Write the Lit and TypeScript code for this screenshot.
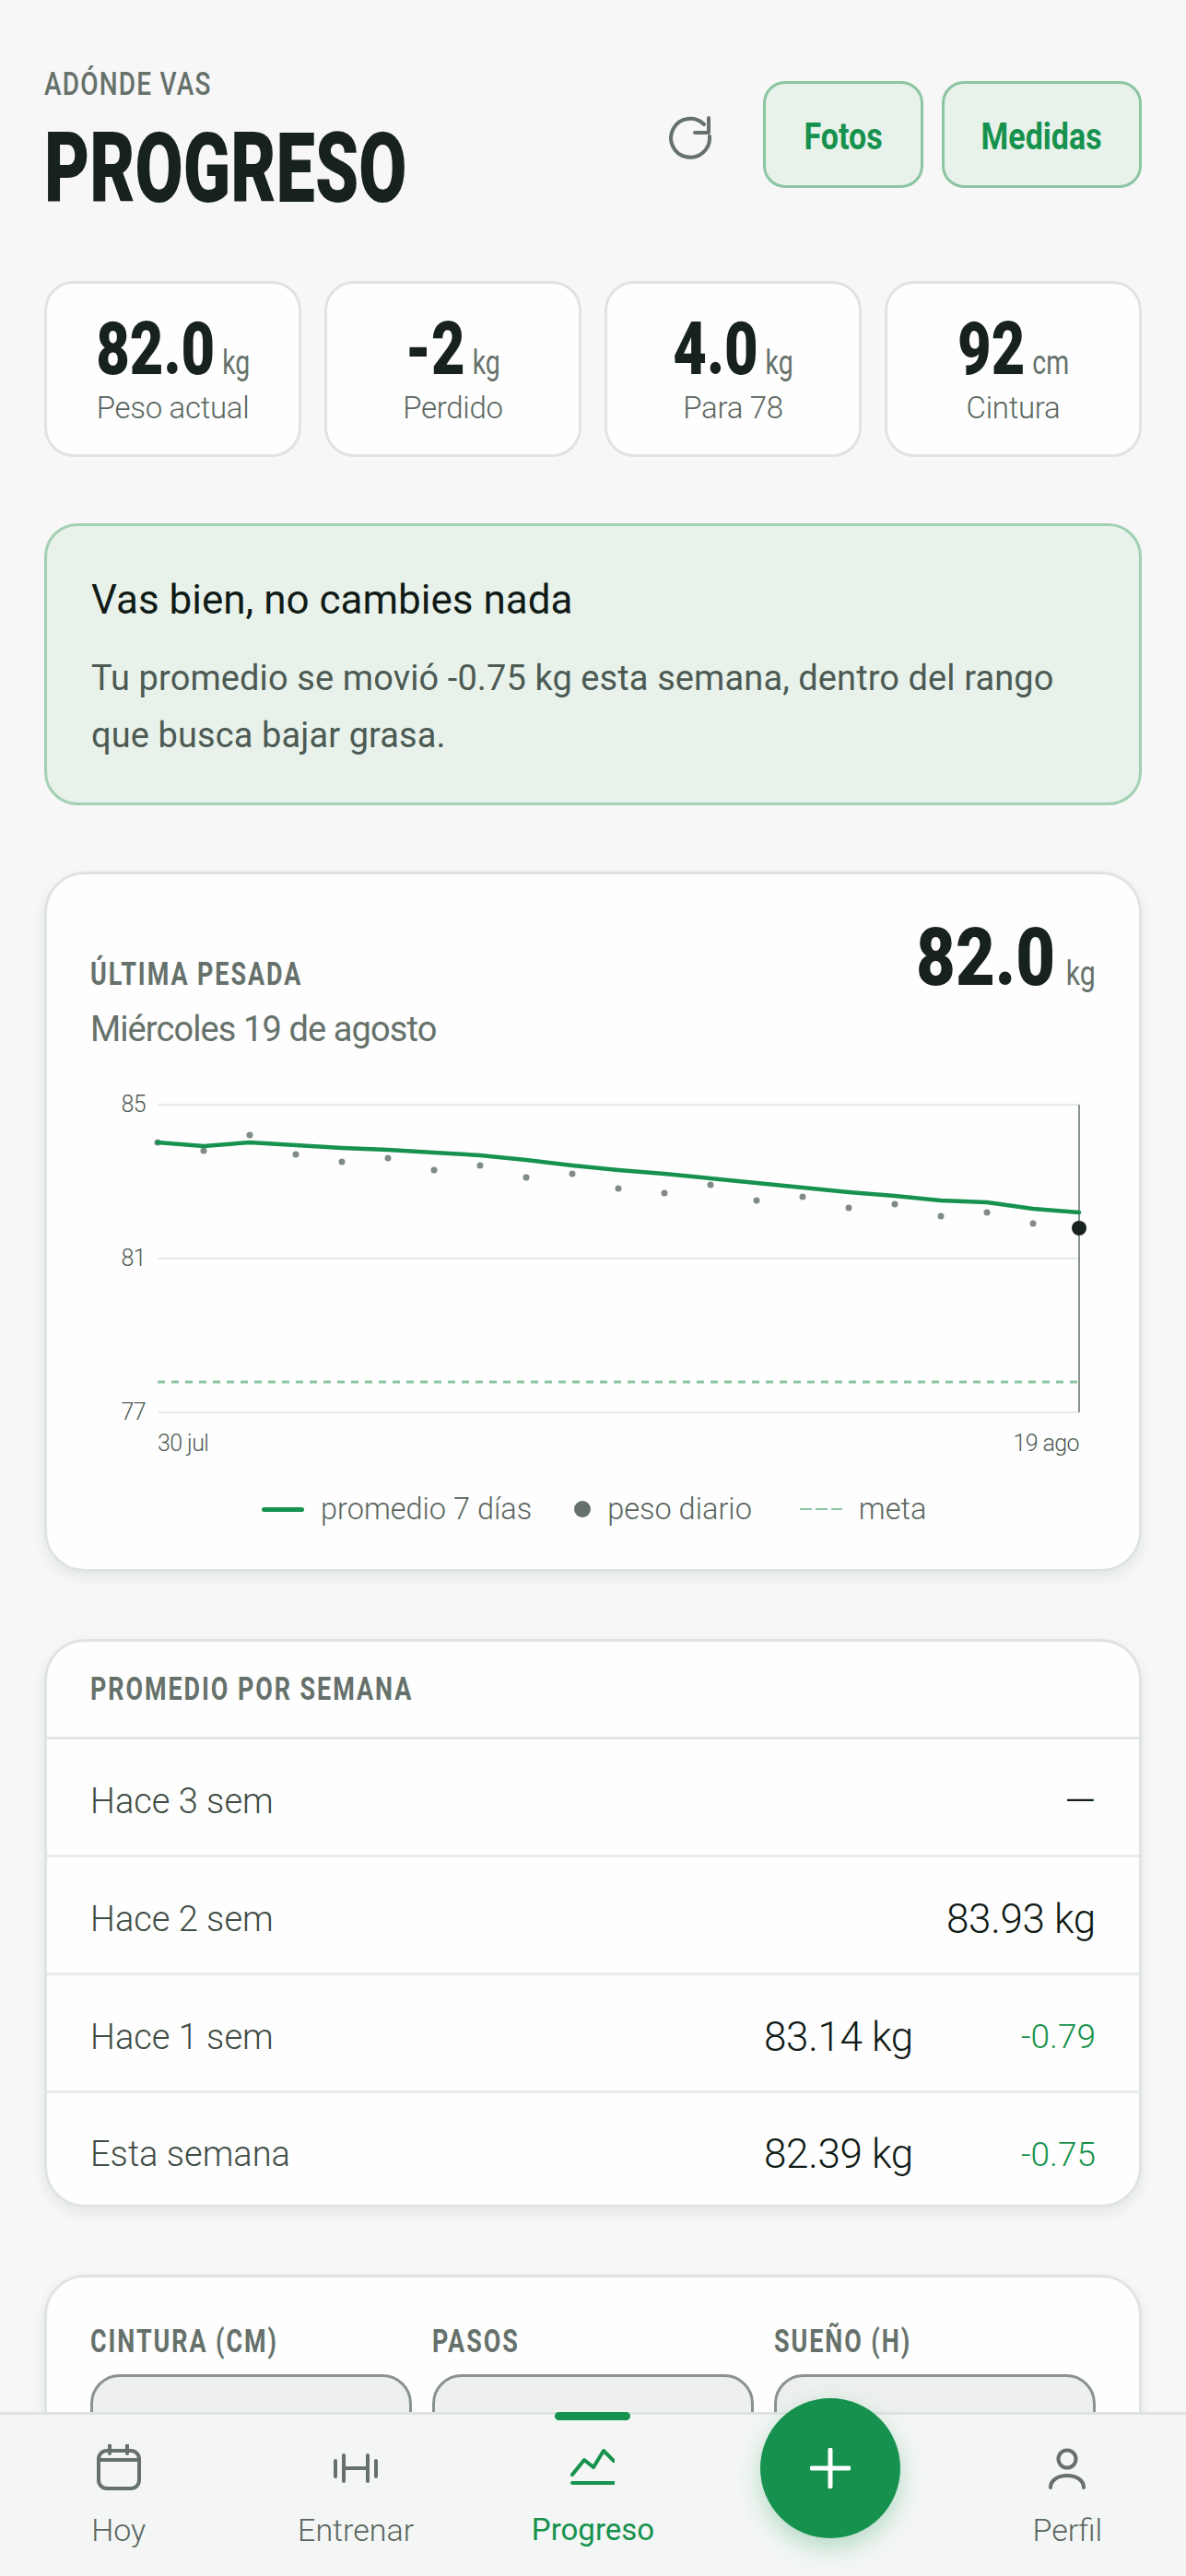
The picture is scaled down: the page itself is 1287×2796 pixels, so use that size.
import { LitElement, html, css, svg } from 'lit';
import { customElement } from 'lit/decorators.js';

const STATS = [
  { value: '82.0', unit: 'kg', label: 'Peso actual' },
  { value: '-2', unit: 'kg', label: 'Perdido' },
  { value: '4.0', unit: 'kg', label: 'Para 78' },
  { value: '92', unit: 'cm', label: 'Cintura' },
];

const WEEKS = [
  { label: 'Hace 3 sem', value: '—', delta: '' },
  { label: 'Hace 2 sem', value: '83.93 kg', delta: '' },
  { label: 'Hace 1 sem', value: '83.14 kg', delta: '-0.79' },
  { label: 'Esta semana', value: '82.39 kg', delta: '-0.75' },
];

// y of each day, measured in page pixels minus the chart top
const AVG = [1239, 1243, 1239, 1242, 1245, 1247, 1250, 1253, 1258, 1264, 1269, 1273, 1278, 1283, 1288, 1293, 1297, 1302, 1304, 1311, 1315];
const DAILY = [1239, 1248, 1231, 1252, 1260, 1256, 1269, 1264, 1277, 1273, 1289, 1294, 1285, 1302, 1298, 1310, 1306, 1319, 1315, 1327];
const CHART_TOP = 1180;

const chartX = (i: number) => 171 - 98 + i * 50;
const chartY = (y: number) => y - CHART_TOP;

const ICONS = {
  calendar: svg`<rect x="2" y="7" width="44" height="41" rx="9"/><path d="M2 17h44M14 1v9M33 1v9"/>`,
  dumbbell: svg`<path d="M2 18v17M11 12v28M37 12v28M46 18v17M11 26h26"/>`,
  trend: svg`<path d="M2 33l13-16 10 8L36 7l11 11M2 42h45"/>`,
  person: svg`<circle cx="24" cy="16" r="9.5"/><path d="M6 47c0-8 8-13 18-13s18 5 18 13"/>`,
};

@customElement('app-root')
export class AppRoot extends LitElement {
  static override styles = css`
    :host {
      display: block;
      position: relative;
      width: 1287px;
      height: 2796px;
      overflow: hidden;
      background: #f6f7f6;
      color: #17211d;
      font-family: 'Roboto', 'Liberation Sans', sans-serif;
    }
    .page { padding: 70px 48px 0; display: flex; flex-direction: column; }

    /* header */
    .head { display: flex; justify-content: space-between; height: 235px; }
    .eyebrow { width: max-content; font-size: 35px; line-height: 44px; letter-spacing: 1.5px; color: #66716b; font-weight: 500; transform: scaleX(.8); transform-origin: left; }
    .title { width: max-content; font-size: 105px; line-height: 100px; font-weight: 900; margin-top: 20px; transform: scaleX(.72); transform-origin: left; }
    .actions { display: flex; align-items: flex-start; padding-top: 18px; }
    .refresh { width: 48px; height: 48px; margin: 37px 55px 0 2px; fill: none; stroke: #66716b; stroke-width: 4; stroke-linecap: round; stroke-linejoin: round; }
    .chip {
      height: 116px; box-sizing: border-box; padding-top: 5px; border: 3px solid #8cc5a2; border-radius: 24px; background: #e8f2eb;
      display: flex; align-items: center; justify-content: center;
      color: #16924e; font-size: 40px; font-weight: 700;
    }
    .chip span { transform: scaleX(.85); }
    .chip.fotos { width: 174px; margin-right: 20px; }
    .chip.medidas { width: 217px; }

    /* stats */
    .stats { display: grid; grid-template-columns: repeat(4, 279px); justify-content: space-between; }
    .stat {
      height: 191px; box-sizing: border-box; background: #fdfefd; border: 3px solid #dfe4e2; border-radius: 32px;
      display: flex; flex-direction: column; align-items: center; padding-top: 31px;
    }
    .stat-top { display: flex; align-items: baseline; gap: 10px; line-height: 80px; transform: scaleX(.79); }
    .stat-val { font-size: 80px; font-weight: 900; }
    .stat-unit { font-size: 36px; color: #66716b; }
    .stat-label { font-size: 33px; line-height: 44px; letter-spacing: -.3px; font-weight: 300; color: #5a655f; margin-top: -13px; }

    /* banner */
    .banner {
      margin-top: 72px; height: 306px; box-sizing: border-box; padding: 52px 48px 0;
      background: #e8f2eb; border: 3px solid #a3d0b3; border-radius: 36px;
    }
    .banner h2 { margin: 0; font-size: 44px; line-height: 56px; font-weight: 400; color: #101a16; }
    .banner p { margin: 26px 0 0; font-size: 38px; line-height: 62px; letter-spacing: .1px; color: #4d5a53; }

    /* cards */
    .card {
      background: #fdfefd; border: 3px solid #dfe4e2; border-radius: 44px; box-sizing: border-box;
      box-shadow: 0 6px 14px rgba(30, 50, 40, 0.08);
    }
    .weight { margin-top: 72px; height: 760px; padding: 40px 47px 0; }
    .weight-top { display: flex; justify-content: space-between; align-items: flex-start; height: 192px; }
    .section { width: max-content; font-size: 35px; line-height: 44px; letter-spacing: 2.5px; font-weight: 700; color: #66716b; transform: scaleX(.77); transform-origin: left; }
    .weight .section { margin-top: 47px; }
    .date { font-size: 38px; line-height: 52px; letter-spacing: -.9px; color: #66716b; margin-top: 11px; }
    .weight-val { display: flex; align-items: baseline; gap: 14px; line-height: 100px; transform: scaleX(.84); transform-origin: right; }
    .weight-num { font-size: 88px; font-weight: 900; }
    .weight-unit { font-size: 36px; color: #66716b; }
    .chart { display: block; width: 1100px; height: 420px; margin-left: 0; overflow: visible; }
    .chart text { font-family: 'Roboto', sans-serif; font-size: 25px; font-weight: 300; letter-spacing: -.6px; fill: #4f5a54; }
    .legend { display: flex; align-items: center; margin-left: 186px; margin-top: 15px; font-size: 32.5px; font-weight: 300; line-height: 44px; color: #5a655f; }
    .lg-line { width: 46px; height: 5px; border-radius: 3px; background: #16924e; margin-right: 18px; }
    .lg-dot { width: 18px; height: 18px; border-radius: 50%; background: #66716b; margin: 0 18px 0 46px; }
    .lg-dash { width: 46px; height: 2px; background: repeating-linear-gradient(90deg, #8cc5a2 0 13px, transparent 13px 17px); margin: 0 18px 0 52px; }

    /* weekly table */
    .weeks { margin-top: 73px; height: 617px; }
    .weeks-head { height: 106px; box-sizing: border-box; padding: 30px 47px 0; border-bottom: 3px solid #e3e7e5; }
    .row { height: 128px; box-sizing: border-box; padding: 8px 47px 0; display: flex; align-items: center; border-bottom: 3px solid #e9ecea; font-size: 38px; font-weight: 300; color: #3f4b45; }
    .row:last-child { border-bottom: none; height: 124px; }
    .row-label { flex: 1; }
    .row-val { color: #101a16; font-size: 44px; letter-spacing: -.3px; text-align: right; }
    .row-delta { width: 198px; text-align: right; color: #16924e; font-size: 37px; }

    /* trackers */
    .trackers { margin-top: 73px; height: 400px; padding: 48px 47px 0; display: grid; grid-template-columns: repeat(3, 349px); justify-content: space-between; align-content: start; }
    .tracker-box { margin-top: 13px; height: 120px; box-sizing: border-box; border: 3px solid #8a938e; border-radius: 32px; background: #edf0ee; }

    /* bottom nav */
    .nav {
      position: absolute; left: 0; right: 0; bottom: 0; height: 178px; box-sizing: border-box;
      border-top: 3px solid #dfe4e2; background: #f3f6f4;
      display: grid; grid-template-columns: repeat(5, 1fr);
    }
    .nav-item { position: relative; display: flex; flex-direction: column; align-items: center; padding-top: 32px; color: #5a655f; font-size: 34px; font-weight: 300; }
    .nav-item svg { width: 48px; height: 50px; fill: none; stroke: #66716b; stroke-width: 4; stroke-linecap: round; stroke-linejoin: round; }
    .nav-label { margin-top: 21px; line-height: 44px; }
    .nav-item.on { color: #16924e; font-weight: 400; font-size: 33px; }
    .nav-item.on svg { stroke: #16924e; }
    .nav-item.on::before { content: ''; position: absolute; top: -3px; left: 50%; width: 82px; height: 9px; margin-left: -41px; border-radius: 5px; background: #16924e; }
    .fab {
      position: absolute; left: 50%; top: -18px; width: 152px; height: 152px; margin-left: -76px; border-radius: 50%;
      background: #16924e; box-shadow: 0 10px 24px rgba(22, 146, 78, 0.28);
      display: flex; align-items: center; justify-content: center;
    }
    .nav-item .fab svg { width: 44px; height: 44px; stroke: #fff; stroke-width: 5; }
  `;

  private renderChart() {
    const avg = AVG.map((y, i) => `${chartX(i)},${chartY(y)}`).join(' ');
    const left = chartX(0);
    const right = chartX(20);
    return html`<svg class="chart" viewBox="0 0 1100 420">
      ${[[85, 1198], [81, 1365], [77, 1532]].map(([n, y]) => svg`
        <line x1=${left} x2=${right} y1=${chartY(y)} y2=${chartY(y)} stroke="#e6e9e7" stroke-width="2"/>
        <text x="60" y=${chartY(y) + 8} text-anchor="end">${n}</text>`)}
      <line x1=${left} x2=${right} y1=${chartY(1499)} y2=${chartY(1499)} stroke="#8cc5a2" stroke-width="3" stroke-dasharray="8 7"/>
      <line x1=${right} x2=${right} y1=${chartY(1198)} y2=${chartY(1532)} stroke="#8a938e" stroke-width="2"/>
      ${DAILY.map((y, i) => svg`<circle cx=${chartX(i)} cy=${chartY(y)} r="3.5" fill="#818b86"/>`)}
      <polyline points=${avg} fill="none" stroke="#16924e" stroke-width="4.5" stroke-linecap="round" stroke-linejoin="round"/>
      <circle cx=${right} cy=${chartY(1332)} r="8" fill="#17211d"/>
      <text x=${left} y="394">30 jul</text>
      <text x=${right} y="394" text-anchor="end">19 ago</text>
    </svg>`;
  }

  override render() {
    return html`
      <div class="page">
        <div class="head">
          <div>
            <div class="eyebrow">ADÓNDE VAS</div>
            <div class="title">PROGRESO</div>
          </div>
          <div class="actions">
            <svg class="refresh" viewBox="0 0 48 48"><path d="M45 23a21 21 0 1 1-6-13M44 3v16H29"/></svg>
            <div class="chip fotos"><span>Fotos</span></div>
            <div class="chip medidas"><span>Medidas</span></div>
          </div>
        </div>

        <div class="stats">
          ${STATS.map(s => html`<div class="stat">
            <div class="stat-top"><span class="stat-val">${s.value}</span><span class="stat-unit">${s.unit}</span></div>
            <div class="stat-label">${s.label}</div>
          </div>`)}
        </div>

        <div class="banner">
          <h2>Vas bien, no cambies nada</h2>
          <p>Tu promedio se movió -0.75 kg esta semana, dentro del rango<br>que busca bajar grasa.</p>
        </div>

        <div class="card weight">
          <div class="weight-top">
            <div>
              <div class="section">ÚLTIMA PESADA</div>
              <div class="date">Miércoles 19 de agosto</div>
            </div>
            <div class="weight-val"><span class="weight-num">82.0</span><span class="weight-unit">kg</span></div>
          </div>
          ${this.renderChart()}
          <div class="legend">
            <span class="lg-line"></span>promedio 7 días
            <span class="lg-dot"></span>peso diario
            <span class="lg-dash"></span>meta
          </div>
        </div>

        <div class="card weeks">
          <div class="weeks-head"><div class="section">PROMEDIO POR SEMANA</div></div>
          ${WEEKS.map(w => html`<div class="row">
            <span class="row-label">${w.label}</span>
            <span class="row-val">${w.value}</span>
            ${w.delta ? html`<span class="row-delta">${w.delta}</span>` : ''}
          </div>`)}
        </div>

        <div class="card trackers">
          ${['CINTURA (CM)', 'PASOS', 'SUEÑO (H)'].map(t => html`<div class="tracker">
            <div class="section">${t}</div>
            <div class="tracker-box"></div>
          </div>`)}
        </div>
      </div>

      <nav class="nav">
        <div class="nav-item"><svg viewBox="0 0 48 50">${ICONS.calendar}</svg><span class="nav-label">Hoy</span></div>
        <div class="nav-item"><svg viewBox="0 0 48 50">${ICONS.dumbbell}</svg><span class="nav-label">Entrenar</span></div>
        <div class="nav-item on"><svg viewBox="0 0 48 50">${ICONS.trend}</svg><span class="nav-label">Progreso</span></div>
        <div class="nav-item">
          <div class="fab"><svg viewBox="0 0 44 44"><path d="M22 2v40M2 22h40" stroke-linecap="round"/></svg></div>
        </div>
        <div class="nav-item"><svg viewBox="0 0 48 50">${ICONS.person}</svg><span class="nav-label">Perfil</span></div>
      </nav>
    `;
  }
}
